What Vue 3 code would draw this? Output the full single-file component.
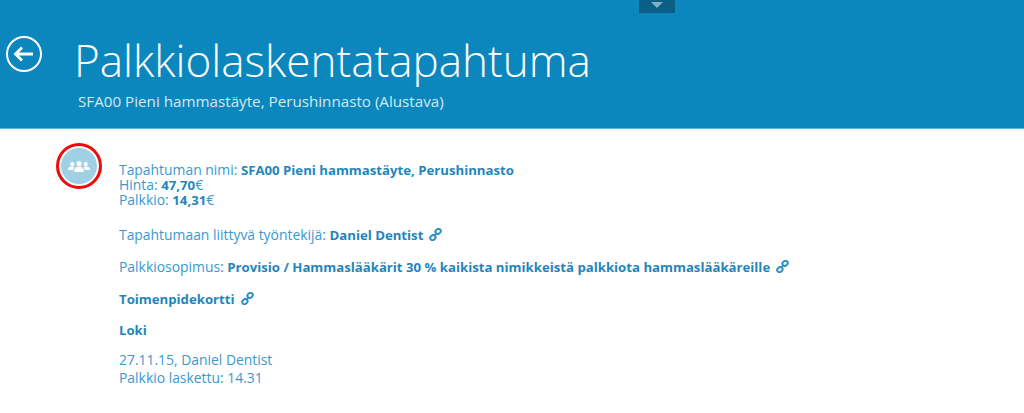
<script setup>
const rows = 1
</script>

<template>
  <div class="page">
    <header class="hero">
      <div class="tab"><span class="tri"></span></div>
      <div class="back">
        <svg width="38" height="38" viewBox="0 0 38 38" fill="none" stroke="#fff">
          <circle cx="19" cy="19" r="17" stroke-width="2" />
          <path d="M10.500 19H28M17 12.500l-6.500 6.500 6.500 6.500" stroke-width="2.800" />
        </svg>
      </div>
      <div class="titles">
        <h1>Palkkiolaskentatapahtuma</h1>
        <p>SFA00 Pieni hammastäyte, Perushinnasto (Alustava)</p>
      </div>
    </header>
    <main class="body">
      <div class="avatar">
        <svg width="22" height="11" viewBox="0 0 26 13" fill="#fff">
          <circle cx="5" cy="3.600" r="2.500" /><circle cx="13" cy="3" r="3" /><circle cx="21" cy="3.600" r="2.500" />
          <path d="M0 10c0-2.500 2-3.600 5-3.600 1 0 2 .2 2.600.5C6.700 8 6.300 9 6.300 10.500H0z" />
          <path d="M7.500 13v-2c0-2.800 2.500-4.500 5.500-4.500s5.500 1.700 5.500 4.500v2z" />
          <path d="M26 10c0-2.500-2-3.600-5-3.600-1 0-2 .2-2.600.5 .9 1.100 1.300 2.100 1.300 3.600H26z" />
        </svg>
      </div>
      <div class="content">
        <p class="row1">
          Tapahtuman nimi: <b>SFA00 Pieni hammastäyte, Perushinnasto</b><br />
          Hinta: <b>47,70</b>€<br />
          Palkkio: <b>14,31</b>€
        </p>
        <p class="row2">
          Tapahtumaan liittyvä työntekijä: <b>Daniel Dentist</b>
          <svg class="chain" width="13" height="13" viewBox="0 0 13 13" fill="none" stroke="#2e8fc4" stroke-width="2"><rect x="6.300" y="1.200" width="5.600" height="4.400" rx="2.200" transform="rotate(-40 9.100 3.400)" /><rect x="1.100" y="7.400" width="5.600" height="4.400" rx="2.200" transform="rotate(-40 3.900 9.600)" /><path d="M5 8l3-3" stroke-width="1.500" /></svg>
        </p>
        <p class="row3">
          Palkkiosopimus: <b>Provisio / Hammaslääkärit 30 % kaikista nimikkeistä palkkiota hammaslääkäreille</b>
          <svg class="chain" width="13" height="13" viewBox="0 0 13 13" fill="none" stroke="#2e8fc4" stroke-width="2"><rect x="6.300" y="1.200" width="5.600" height="4.400" rx="2.200" transform="rotate(-40 9.100 3.400)" /><rect x="1.100" y="7.400" width="5.600" height="4.400" rx="2.200" transform="rotate(-40 3.900 9.600)" /><path d="M5 8l3-3" stroke-width="1.500" /></svg>
        </p>
        <p class="row4">
          <b>Toimenpidekortti</b>
          <svg class="chain" width="13" height="13" viewBox="0 0 13 13" fill="none" stroke="#2e8fc4" stroke-width="2"><rect x="6.300" y="1.200" width="5.600" height="4.400" rx="2.200" transform="rotate(-40 9.100 3.400)" /><rect x="1.100" y="7.400" width="5.600" height="4.400" rx="2.200" transform="rotate(-40 3.900 9.600)" /><path d="M5 8l3-3" stroke-width="1.500" /></svg>
        </p>
        <p class="row5"><b>Loki</b></p>
        <p class="row6">27.11.15, Daniel Dentist</p>
        <p class="row7">Palkkio laskettu: 14.31</p>
      </div>
    </main>
  </div>
</template>

<style>
html, body { margin: 0; background: #fff; }
</style>

<style scoped>
.page { width: 1024px; height: 413px; overflow: hidden; font-family: "Open Sans", sans-serif; background: #fff; }
.hero { position: relative; height: 128px; background: #0b87bd; border-bottom: 1px solid #5fb3d8; display: flex; color: #fff; }
.tab { position: absolute; left: 639px; top: 0; width: 36px; height: 13px; background: #0b5f86; display: flex; justify-content: center; }
.tri { margin-top: 2px; width: 0; height: 0; border-left: 6px solid transparent; border-right: 6px solid transparent; border-top: 6px solid #7fb0c4; }
.back { margin: 35px 0 0 5px; width: 38px; height: 38px; }
.titles { margin-left: 35px; }
h1 { margin: 32px 0 0 -4px; font-size: 44px; font-weight: 300; line-height: 56px; }
p { margin: 0; }
.titles p { font-size: 15.200px; line-height: 20px; margin-top: 3px; color: #d3e9f3; white-space: nowrap; }
.body { position: relative; padding: 33px 0 0 119px; }
.avatar { position: absolute; left: 56px; top: 14px; box-sizing: border-box; width: 46px; height: 46px; border: 3px solid #f00a0a; border-radius: 50%; background: #a0d0e4; box-shadow: inset 0 0 0 2px #fff; display: flex; align-items: center; justify-content: center; }
.content { color: #3a98cf; font-size: 13.900px; line-height: 15px; white-space: nowrap; }
.row1 { margin-bottom: 20px; }
.row2 { margin-bottom: 17px; }
.row3 { margin-bottom: 17px; }
.row4 { margin-bottom: 16px; }
.row5 { margin-bottom: 15px; }
.row6 { margin-bottom: 3px; }
b { font-weight: 700; font-size: 13.200px; line-height: 0; color: #1f86bb; }
.chain { margin-left: 6px; vertical-align: -1px; }
</style>
